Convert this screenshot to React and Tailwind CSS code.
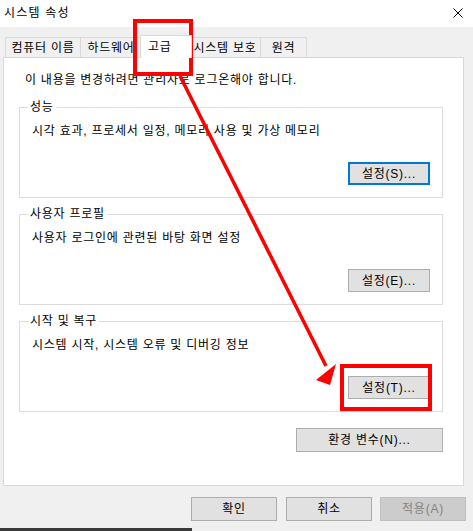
import React from "react";

const Btn = ({ label, className = "", focused = false, disabled = false }) => (
  <div
    className={
      "flex items-center justify-center leading-[16px] " +
      (focused
        ? "border-2 border-[#0078d7] bg-[#e1e1e1] "
        : disabled
        ? "border border-[#bfbfbf] bg-[#cccccc] text-[#838383] "
        : "border border-[#adadad] bg-[#e1e1e1] ") +
      className
    }
  >
    {label}
  </div>
);

const Group = ({ title, desc, button, focused }) => (
  <div className="relative w-[424px] h-[91px] border border-[#dcdcdc] flex flex-col">
    <span className="absolute -top-[9px] left-[8px] bg-white px-[2px] leading-[16px]">{title}</span>
    <div className="pt-[15px] pl-[12px] leading-[16px]">{desc}</div>
    <div className="mt-auto mb-[12px] mr-[12px] self-end">
      <Btn label={button} focused={focused} className="w-[82px] h-[23px]" />
    </div>
  </div>
);

const tabs = [
  { label: "컴퓨터 이름", w: "w-[76px]" },
  { label: "하드웨어", w: "w-[62px]" },
  { label: "고급", w: "w-[52px]", active: true },
  { label: "시스템 보호", w: "w-[72px]" },
  { label: "원격", w: "w-[47px]" },
];

export default function App() {
  return (
    <div className="relative w-[473px] h-[531px] overflow-hidden bg-[#f0f0f0] text-[12px] tracking-[0.75px] text-black font-['Liberation_Sans','Noto_Sans_CJK_KR',sans-serif]">
      {/* title bar */}
      <div className="h-[27px] bg-white flex items-center justify-between pl-[4px] pr-[10px]">
        <span className="leading-[16px] -mt-[2px] tracking-[1.2px]">시스템 속성</span>
        <svg width="10" height="10" viewBox="0 0 10 10" className="-mt-[2px]">
          <path d="M0.5 0.5 L9.5 9.5 M9.5 0.5 L0.5 9.5" stroke="#000" strokeWidth="1" />
        </svg>
      </div>

      {/* tabs */}
      <div className="px-[3px] pt-[8px]">
        <div className="flex items-end h-[22px] ml-[2px]">
          {tabs.map((t) =>
            t.active ? (
              <div
                key={t.label}
                className={"relative z-10 -mx-[2px] -mb-[1px] h-[23px] bg-white border border-b-0 border-[#d9d9d9] flex items-start pt-[3px] pl-[7px] leading-[16px] " + t.w}
              >
                {t.label}
              </div>
            ) : (
              <div
                key={t.label}
                className={"h-[20px] border border-b-0 border-[#d9d9d9] -ml-px first:ml-0 flex items-center justify-center leading-[16px] " + t.w}
              >
                {t.label}
              </div>
            )
          )}
        </div>

        {/* panel */}
        <div className="w-[461px] h-[429px] bg-white border border-[#d9d9d9] pl-[15px]">
          <div className="h-[49px] pt-[14px] pl-[6px] leading-[16px]">
            이 내용을 변경하려면 관리자로 로그온해야 합니다.
          </div>
          <div className="flex flex-col gap-[16px]">
            <Group title="성능" desc="시각 효과, 프로세서 일정, 메모리 사용 및 가상 메모리" button="설정(S)..." focused />
            <Group title="사용자 프로필" desc="사용자 로그인에 관련된 바탕 화면 설정" button="설정(E)..." />
            <Group title="시작 및 복구" desc="시스템 시작, 시스템 오류 및 디버깅 정보" button="설정(T)..." />
          </div>
          <div className="flex justify-end w-[424px] mt-[16px]">
            <Btn label="환경 변수(N)..." className="w-[147px] h-[24px]" />
          </div>
        </div>
      </div>

      {/* dialog buttons */}
      <div className="flex pl-[191px] pt-[11px] gap-[9px]">
        <Btn label="확인" className="w-[86px] h-[24px]" />
        <Btn label="취소" className="w-[86px] h-[24px]" />
        <Btn label="적용(A)" disabled className="w-[86px] h-[24px] -ml-px" />
      </div>

      {/* window edge below */}
      <div className="absolute left-0 bottom-0 w-[192px] h-[3px] bg-[#3a3a3a]" />

      {/* annotations */}
      <div className="absolute left-[133px] top-[19px] w-[60px] h-[57px] border-4 border-[#ff0000]" />
      <div className="absolute left-[340px] top-[364px] w-[92px] h-[47px] border-4 border-[#ff0000]" />
      <svg className="absolute left-0 top-0" width="473" height="531" viewBox="0 0 473 531">
        <line x1="180" y1="76" x2="326" y2="366" stroke="#ff0000" strokeWidth="3.5" />
        <polygon points="316,380 336,364 330,385" fill="#ff0000" />
      </svg>
    </div>
  );
}
